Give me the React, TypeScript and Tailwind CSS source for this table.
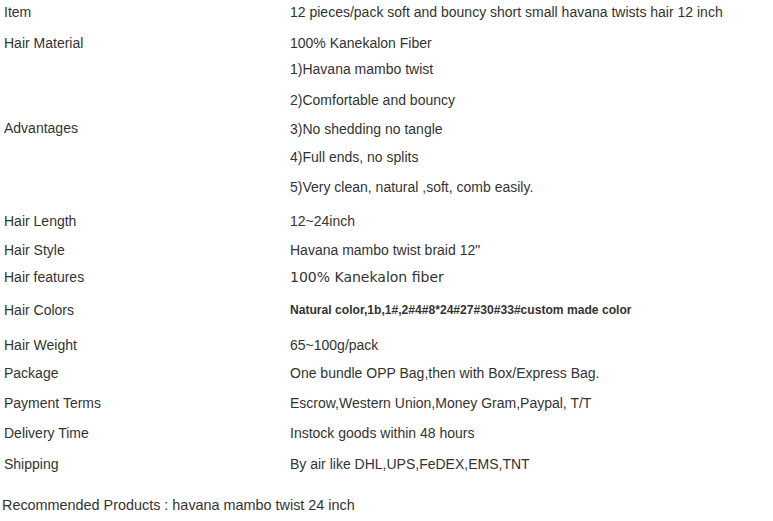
const arial = "font-['Liberation_Sans',Arial,sans-serif]";

type Row = { label: string; value: string; h: number; kind?: "dejavu" | "bold" };

const topRows: Row[] = [
  { label: "Item", value: "12 pieces/pack soft and bouncy short small havana twists hair 12 inch", h: 31 },
  { label: "Hair Material", value: "100% Kanekalon Fiber", h: 26 },
];

const advantages = [
  { text: "1)Havana mambo twist", h: 31 },
  { text: "2)Comfortable and bouncy", h: 29 },
  { text: "3)No shedding no tangle", h: 28 },
  { text: "4)Full ends, no splits", h: 30 },
  { text: "5)Very clean, natural ,soft, comb easily.", h: 16 },
];

const bottomRows: Row[] = [
  { label: "Hair Length", value: "12~24inch", h: 29 },
  { label: "Hair Style", value: "Havana mambo twist braid 12\"", h: 27 },
  { label: "Hair features", value: "100% Kanekalon fiber", h: 33, kind: "dejavu" },
  { label: "Hair Colors", value: "Natural color,1b,1#,2#4#8*24#27#30#33#custom made color", h: 35, kind: "bold" },
  { label: "Hair Weight", value: "65~100g/pack", h: 28 },
  { label: "Package", value: "One bundle OPP Bag,then with Box/Express Bag.", h: 30 },
  { label: "Payment Terms", value: "Escrow,Western Union,Money Gram,Paypal, T/T", h: 30 },
  { label: "Delivery Time", value: "Instock goods within 48 hours", h: 31 },
  { label: "Shipping", value: "By air like DHL,UPS,FeDEX,EMS,TNT", h: 41 },
];

function SpecRow({ row }: { row: Row }) {
  let valueCls = "h-4 leading-4";
  if (row.kind === "dejavu") valueCls = "h-4 leading-4 font-['DejaVu_Sans',Verdana,sans-serif] text-[14px]";
  if (row.kind === "bold") valueCls = "flex h-4 items-center text-[12.1px] font-bold";
  return (
    <div className="grid grid-cols-[286px_1fr]" style={{ height: row.h }}>
      <div className="h-4 leading-4">{row.label}</div>
      <div className={valueCls}>{row.value}</div>
    </div>
  );
}

export default function App() {
  return (
    <div className={`min-h-[521px] w-[773px] bg-white pt-1 text-[14px] text-[#333] ${arial}`}>
      <div className="pl-1">
        {topRows.map((r) => (
          <SpecRow key={r.label} row={r} />
        ))}

        <div className="grid h-[152px] grid-cols-[286px_1fr] items-start">
          <div className="flex h-[134px] items-center leading-4">Advantages</div>
          <div>
            {advantages.map((a) => (
              <div key={a.text} className="leading-4" style={{ height: a.h }}>
                {a.text}
              </div>
            ))}
          </div>
        </div>

        {bottomRows.map((r) => (
          <SpecRow key={r.label} row={r} />
        ))}
      </div>

      <p className="pl-[2px] text-[14.4px] leading-4">Recommended Products : havana mambo twist 24 inch</p>
    </div>
  );
}
